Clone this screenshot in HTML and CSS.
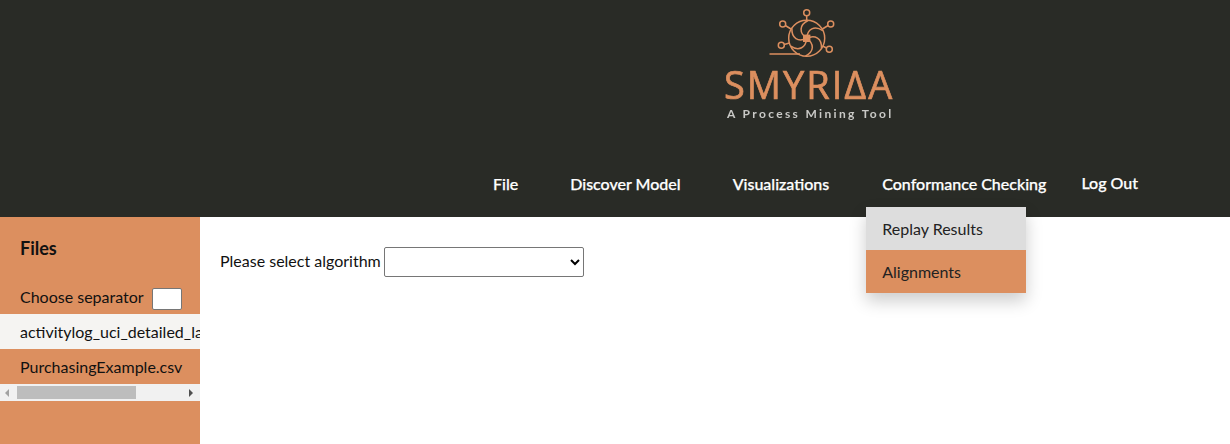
FILE: index.html
```html
<!DOCTYPE html>
<html lang="en">
<head>
<meta charset="utf-8">
<title>Smyrida</title>
<link rel="stylesheet" href="styles.css">
</head>
<body>
<header class="header">
  <div class="logo">
    <svg class="logo-mark" viewBox="765 8 70 50" width="70" height="50" aria-hidden="true">
      <g class="mark-lines">
        <path d="M769.5 54H800"/>
        <circle cx="806.7" cy="38.3" r="18"/>
        <circle cx="806.7" cy="12.7" r="3"/>
        <circle cx="782.7" cy="24" r="3"/>
        <circle cx="830.7" cy="24" r="3"/>
        <circle cx="781.3" cy="45.3" r="3"/>
        <circle cx="829.3" cy="49.3" r="3"/>
        <path d="M806.7 15.7V20.3M785.3 25.5L791 29M828.1 25.5L822.4 29M784.2 44.5L789.5 43M826.6 48L822.5 46"/>
        <path d="M806.7 38.3C799 33 799 25 808 20.5"/>
        <path d="M806.7 38.3C799 33 799 25 808 20.5" transform="rotate(60 806.7 38.3)"/>
        <path d="M806.7 38.3C799 33 799 25 808 20.5" transform="rotate(120 806.7 38.3)"/>
        <path d="M806.7 38.3C799 33 799 25 808 20.5" transform="rotate(180 806.7 38.3)"/>
        <path d="M806.7 38.3C799 33 799 25 808 20.5" transform="rotate(240 806.7 38.3)"/>
        <path d="M806.7 38.3C799 33 799 25 808 20.5" transform="rotate(300 806.7 38.3)"/>
      </g>
      <rect class="mark-hub" x="803" y="34.6" width="7.4" height="7.4"/>
    </svg>
    <div class="logo-name">SMYRIΔA</div>
    <div class="logo-tag">A Process Mining Tool</div>
  </div>
  <nav class="nav">
    <a class="nav-item">File</a>
    <a class="nav-item">Discover Model</a>
    <a class="nav-item">Visualizations</a>
    <div class="nav-menu">
      <a class="nav-item">Conformance Checking</a>
      <div class="dropdown">
        <a class="dropdown-item hovered">Replay Results</a>
        <a class="dropdown-item">Alignments</a>
      </div>
    </div>
    <a class="nav-item logout">Log Out</a>
  </nav>
</header>
<div class="content">
  <aside class="sidebar">
    <h2 class="sidebar-title">Files</h2>
    <label class="separator"><span class="separator-text">Choose separator</span> <input class="separator-input" type="text"></label>
    <div class="file-list">
      <div class="file selected">activitylog_uci_detailed_labour.xes</div>
      <div class="file">PurchasingExample.csv</div>
    </div>
    <div class="scrollbar">
      <span class="arrow arrow-left"></span>
      <span class="thumb"></span>
      <span class="arrow arrow-right"></span>
    </div>
  </aside>
  <main class="main">
    <label class="algo-label">Please select algorithm</label>
    <select class="algo-select"><option></option></select>
  </main>
</div>
</body>
</html>
```
FILE: styles.css
```css
* { box-sizing: border-box; }
html, body { height: 100%; }
body {
  margin: 0;
  display: flex;
  flex-direction: column;
  font-family: "Lato", sans-serif;
  font-size: 16px;
  color: #111;
  background: #fff;
  overflow: hidden;
}
.header {
  height: 217px;
  flex: none;
  background: #292b26;
  display: flex;
  flex-direction: column;
}
.logo {
  width: 170px;
  margin-left: 724px;
  padding-top: 8px;
  height: 174px;
  filter: blur(0.35px);
}
.logo-mark { display: block; margin-left: 41px; }
.mark-lines { fill: none; stroke: #dc8f5f; stroke-width: 1.5; }
.mark-hub { fill: #dc8f5f; }
.logo-name {
  margin-top: 9px;
  font-family: "Open Sans", sans-serif;
  font-weight: 400;
  -webkit-text-stroke: 0.7px #dc8f5f;
  font-size: 38px;
  line-height: 34px;
  letter-spacing: 2px;
  white-space: nowrap;
  color: #dc8f5f;
}
.logo-tag {
  margin-top: 6px;
  margin-left: 3px;
  font-weight: 700;
  font-size: 12px;
  line-height: 14px;
  letter-spacing: 2.35px;
  white-space: nowrap;
  color: #c9c9c6;
}
.nav {
  display: flex;
  justify-content: flex-end;
  padding-right: 92px;
  gap: 52px;
  height: 26px;
}
.nav-item {
  display: block;
  color: #fff;
  font-weight: 500;
  -webkit-text-stroke: 0.25px #fff;
  line-height: 19px;
  white-space: nowrap;
}
.nav-menu { position: relative; margin-left: 1px; }
.logout { margin-left: -17px; margin-top: -1px; }
.dropdown {
  position: absolute;
  top: 33px;
  left: -16px;
  width: 160px;
  box-shadow: 0 8px 16px rgba(0, 0, 0, 0.2);
  z-index: 2;
}
.dropdown-item {
  display: block;
  height: 43px;
  padding: 12px 16px;
  line-height: 20px;
  color: #222;
  background: #dc8f5f;
}
.dropdown-item.hovered { background: #dddddd; }
.content { flex: 1; display: flex; min-height: 0; }
.sidebar {
  width: 200px;
  flex: none;
  background: #dc8f5f;
  overflow: hidden;
}
.sidebar-title {
  margin: 0;
  padding: 20px 0 0 20px;
  font-size: 18px;
  font-weight: 700;
  line-height: 22px;
  height: 69px;
}
.separator {
  display: flex;
  align-items: center;
  height: 28px;
  padding: 0 0 2px 20px;
  gap: 8px;
  white-space: nowrap;
}
.separator-text { padding-bottom: 6px; }
.separator-input {
  width: 30px;
  height: 22px;
  border: 1px solid #767676;
  border-radius: 2px;
  background: #fff;
  padding: 0;
}
.file {
  height: 35px;
  padding: 0 0 0 20px;
  line-height: 35px;
  white-space: nowrap;
  overflow: hidden;
}
.file.selected { background: #f5f4f2; }
.scrollbar {
  height: 17px;
  background: #f1f1f1;
  display: flex;
  align-items: center;
  padding: 0 6px 0 5px;
}
.thumb {
  width: 119px;
  height: 13px;
  background: #bdbdbd;
  margin-right: 53px;
}
.arrow { width: 0; height: 0; border-top: 4px solid transparent; border-bottom: 4px solid transparent; }
.arrow-left { border-right: 4px solid #a3a3a3; margin-right: 8px; }
.arrow-right { border-left: 4px solid #505050; }
.main { flex: 1; padding: 30px 20px; display: flex; align-items: flex-start; gap: 3px; }
.algo-label { line-height: 28px; }
.algo-select {
  width: 200px;
  height: 30px;
  background: #fff;
  border: 1px solid #767676;
  border-radius: 2px;
  font-family: "Lato", sans-serif;
  font-size: 16px;
}
```
